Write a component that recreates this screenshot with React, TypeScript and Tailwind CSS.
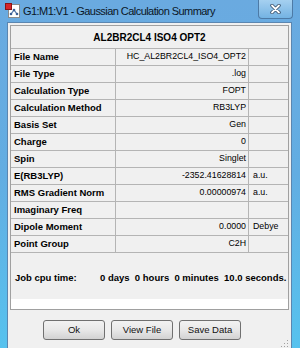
import React from "react";

const rows: [string, string, string][] = [
  ["File Name", "HC_AL2BR2CL4_ISO4_OPT2", ""],
  ["File Type", ".log", ""],
  ["Calculation Type", "FOPT", ""],
  ["Calculation Method", "RB3LYP", ""],
  ["Basis Set", "Gen", ""],
  ["Charge", "0", ""],
  ["Spin", "Singlet", ""],
  ["E(RB3LYP)", "-2352.41628814", "a.u."],
  ["RMS Gradient Norm", "0.00000974", "a.u."],
  ["Imaginary Freq", "", ""],
  ["Dipole Moment", "0.0000", "Debye"],
  ["Point Group", "C2H", ""],
];

function AppIcon() {
  return (
    <svg width="16" height="16" viewBox="0 0 16 16">
      <rect x="3.5" y="1.5" width="11" height="13" fill="#ffffff" stroke="#8a8a8a" />
      <line x1="6" y1="11" x2="9" y2="7" stroke="#4a6fa5" strokeWidth="1.2" />
      <line x1="9" y1="7" x2="12" y2="11" stroke="#4a6fa5" strokeWidth="1.2" />
      <circle cx="9" cy="7" r="1.3" fill="#3a5f95" />
      <circle cx="6" cy="11" r="1.3" fill="#3a5f95" />
      <circle cx="12" cy="11" r="1.3" fill="#3a5f95" />
      <rect x="0.5" y="0.5" width="6" height="6" fill="#d8262a" stroke="#8c1414" />
    </svg>
  );
}

function Btn({ label }: { label: string }) {
  return (
    <div className="w-[62px] h-[20px] rounded-[3px] border border-[#707070] bg-gradient-to-b from-[#f2f2f2] via-[#e8e8e8] to-[#d2d2d2] flex items-center justify-center text-[9.5px] text-[#111]">
      {label}
    </div>
  );
}

export default function App() {
  return (
    <div
      className="w-[300px] h-[348px] flex flex-col overflow-hidden bg-gradient-to-b from-[#6aaae0] via-[#62ade2] to-[#56c2ee]"
      style={{ fontFamily: '"Liberation Sans", Arial, sans-serif' }}
    >
      {/* Title bar */}
      <div className="h-[22px] flex items-start relative shrink-0">
        <div className="ml-[5px] mt-[3px]">
          <AppIcon />
        </div>
        <div className="ml-[2px] mt-[3px] text-[11px] tracking-[-0.55px] text-[#0b1626] whitespace-nowrap">
          G1:M1:V1 - Gaussian Calculation Summary
        </div>
        <div className="absolute right-[7px] top-0 w-[35px] h-[19px] rounded-b-[4px] border border-t-0 border-[#4d7aa6] bg-gradient-to-b from-[#a5d0f0] to-[#74b3e3] flex items-center justify-center">
          <svg width="11" height="10" viewBox="0 0 11 10">
            <path d="M2 1.5 L9 8.5 M9 1.5 L2 8.5" stroke="#324a66" strokeWidth="3.4" strokeLinecap="round" />
            <path d="M2 1.5 L9 8.5 M9 1.5 L2 8.5" stroke="#ffffff" strokeWidth="1.8" strokeLinecap="round" />
          </svg>
        </div>
      </div>

      {/* Client area */}
      <div className="flex-1 ml-[7px] mr-[8px] mb-[7px] bg-[#f0f0f0] border border-[#5b86b0] flex flex-col">
        <div className="mt-[2px] ml-[2px] mr-[2px] h-[285px] border border-[#a0a0a0] bg-white flex flex-col">
          <div className="bg-[#f0f0f0] flex flex-col">
            <div className="h-[23px] border-b border-[#b4b4b4] flex items-center justify-center font-bold text-[10px] text-black">
              AL2BR2CL4 ISO4 OPT2
            </div>
            <div className="grid grid-cols-[105px_133px_1fr]">
              {rows.map(([l, v, u]) => (
                <React.Fragment key={l}>
                  <div className="h-[17px] border-b border-r border-[#b4b4b4] flex items-center pl-[3px] font-bold text-[9.5px] text-black whitespace-nowrap">
                    {l}
                  </div>
                  <div className="h-[17px] border-b border-r border-[#b4b4b4] flex items-center justify-end pr-[2px] text-[8.8px] text-black whitespace-nowrap">
                    {v}
                  </div>
                  <div className="h-[17px] border-b border-[#b4b4b4] flex items-center pl-[4px] text-[8.8px] text-black whitespace-nowrap">
                    {u}
                  </div>
                </React.Fragment>
              ))}
            </div>
            <div className="h-[46px] pt-[4px] flex items-center font-bold text-[9.5px] text-black whitespace-pre">
              <span className="ml-[4px] w-[85px]">Job cpu time:</span>
              <span>0 days  0 hours  0 minutes  10.0 seconds.</span>
            </div>
          </div>
        </div>
        <div className="mt-[10px] ml-[35px] flex gap-[6px]">
          <Btn label="Ok" />
          <Btn label="View File" />
          <Btn label="Save Data" />
        </div>
        <div className="flex-1 flex items-end justify-end pr-[2px] pb-[2px]">
          <svg width="8" height="8" viewBox="0 0 8 8">
            <rect x="6" y="6" width="1" height="1" fill="#a0a0a0" />
            <rect x="3" y="6" width="1" height="1" fill="#a0a0a0" />
            <rect x="6" y="3" width="1" height="1" fill="#a0a0a0" />
            <rect x="0" y="6" width="1" height="1" fill="#a0a0a0" />
            <rect x="3" y="3" width="1" height="1" fill="#a0a0a0" />
            <rect x="6" y="0" width="1" height="1" fill="#a0a0a0" />
          </svg>
        </div>
      </div>
    </div>
  );
}
